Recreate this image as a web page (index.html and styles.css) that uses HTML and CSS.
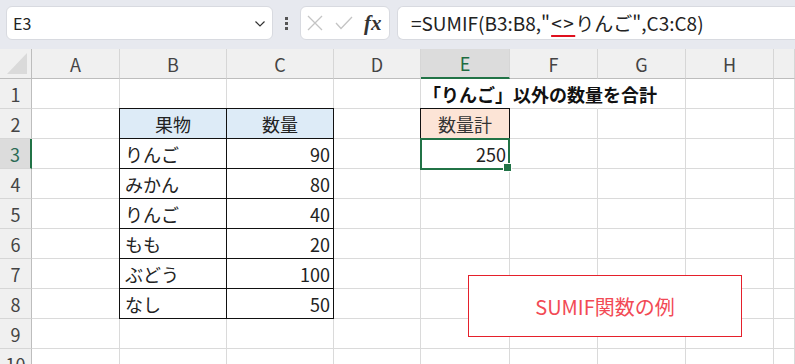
FILE: index.html
```html
<!DOCTYPE html>
<html lang="ja">
<head>
<meta charset="utf-8">
<link rel="stylesheet" href="styles.css">
</head>
<body>
<div class="topbar">
  <div class="namebox">
    <span class="name">E3</span>
    <svg class="chev" width="10" height="6" viewBox="0 0 10 6"><path d="M0.5 0.5 L5 5 L9.5 0.5" fill="none" stroke="#333" stroke-width="1.2"/></svg>
  </div>
  <div class="dots"><i></i><i></i><i></i></div>
  <div class="fxbox">
    <svg class="ic" width="16" height="16" viewBox="0 0 16 16"><path d="M1 1 L15 15 M15 1 L1 15" stroke="#c4c4c4" stroke-width="1.3" fill="none"/></svg>
    <svg class="ic" width="18" height="14" viewBox="0 0 18 14"><path d="M1 7 L6 12.5 L17 1" stroke="#c4c4c4" stroke-width="1.3" fill="none"/></svg>
    <span class="fx">fx</span>
  </div>
  <div class="formula">=SUMIF(B3:B8,"<span class="neq">&lt;&gt;</span>りんご",C3:C8)</div>
</div>
<div class="sheet">
  <div class="grid">
    <div class="corner"><span class="tri"></span></div>
    <div class="ch">A</div><div class="ch">B</div><div class="ch">C</div><div class="ch">D</div><div class="ch hsel">E</div><div class="ch">F</div><div class="ch">G</div><div class="ch">H</div><div class="ch"></div>

    <div class="rh">1</div><div class="c"></div><div class="c"></div><div class="c"></div><div class="c"></div><div class="c title nor">「りんご」以外の数量を合計</div><div class="c nor"></div><div class="c"></div><div class="c"></div><div class="c"></div>

    <div class="rh">2</div><div class="c"></div><div class="c tb hd">果物</div><div class="c tb hd">数量</div><div class="c"></div><div class="c tb hd2">数量計</div><div class="c"></div><div class="c"></div><div class="c"></div><div class="c"></div>

    <div class="rh rsel">3</div><div class="c"></div><div class="c tb">りんご</div><div class="c tb num">90</div><div class="c"></div><div class="c num sel">250</div><div class="c"></div><div class="c"></div><div class="c"></div><div class="c"></div>

    <div class="rh">4</div><div class="c"></div><div class="c tb">みかん</div><div class="c tb num">80</div><div class="c"></div><div class="c"></div><div class="c"></div><div class="c"></div><div class="c"></div><div class="c"></div>

    <div class="rh">5</div><div class="c"></div><div class="c tb">りんご</div><div class="c tb num">40</div><div class="c"></div><div class="c"></div><div class="c"></div><div class="c"></div><div class="c"></div><div class="c"></div>

    <div class="rh">6</div><div class="c"></div><div class="c tb">もも</div><div class="c tb num">20</div><div class="c"></div><div class="c"></div><div class="c"></div><div class="c"></div><div class="c"></div><div class="c"></div>

    <div class="rh">7</div><div class="c"></div><div class="c tb">ぶどう</div><div class="c tb num">100</div><div class="c"></div><div class="c"></div><div class="c"></div><div class="c"></div><div class="c"></div><div class="c"></div>

    <div class="rh">8</div><div class="c"></div><div class="c tb">なし</div><div class="c tb num">50</div><div class="c"></div><div class="c"></div><div class="c"></div><div class="c"></div><div class="c"></div><div class="c"></div>

    <div class="rh">9</div><div class="c"></div><div class="c"></div><div class="c"></div><div class="c"></div><div class="c"></div><div class="c"></div><div class="c"></div><div class="c"></div><div class="c"></div>

    <div class="rh">10</div><div class="c"></div><div class="c"></div><div class="c"></div><div class="c"></div><div class="c"></div><div class="c"></div><div class="c"></div><div class="c"></div><div class="c"></div>
  </div>
  <div class="shape">SUMIF関数の例</div>
</div>
</body>
</html>
```
FILE: styles.css
```css
* { box-sizing: border-box; }
html, body { margin: 0; padding: 0; }
body {
  width: 795px;
  height: 364px;
  overflow: hidden;
  background: #fff;
  font-family: "Noto Sans CJK JP", "Noto Sans", sans-serif;
  color: #222;
}
.topbar {
  height: 49px;
  background: #e7e9ef;
  display: flex;
  align-items: flex-start;
  padding-top: 6px;
}
.namebox {
  margin-left: 6px;
  width: 267px;
  height: 34px;
  background: #fff;
  border: 1px solid #d8dae0;
  border-radius: 6px;
  display: flex;
  align-items: center;
  justify-content: space-between;
  padding: 0 7px 0 6px;
}
.name { font-size: 16px; color: #222; }
.chev { margin-top: 1px; }
.dots {
  width: 27px;
  height: 34px;
  display: flex;
  flex-direction: column;
  align-items: center;
  justify-content: center;
  gap: 2px;
}
.dots i { display: block; width: 3px; height: 3px; background: #555; }
.fxbox {
  width: 90px;
  height: 34px;
  background: #fff;
  border: 1px solid #d8dae0;
  border-radius: 6px;
  display: flex;
  align-items: center;
  padding-left: 6px;
  gap: 12px;
}
.fx {
  font-family: "Liberation Serif", serif;
  font-style: italic;
  font-weight: bold;
  font-size: 21px;
  color: #333;
  margin-left: -1px;
}
.formula {
  margin-left: 7px;
  flex: 1;
  height: 34px;
  background: #fff;
  border: 1px solid #d8dae0;
  border-right: none;
  border-radius: 6px 0 0 6px;
  font-size: 19px;
  line-height: 32px;
  padding-left: 13px;
  color: #222;
  white-space: nowrap;
}
.neq { letter-spacing: 1.5px; padding-left: 1px; text-decoration: underline; text-decoration-color: #e0101e; text-decoration-thickness: 2px; text-underline-offset: 4px; }

.sheet { position: relative; }
.grid {
  display: grid;
  grid-template-columns: 32px 88px 107px 107px 87px 89px 88px 88px 88px 1fr;
  grid-template-rows: 30px repeat(10, 30px);
  font-size: 18px;
}
.corner {
  background: #f0f0f0;
  border-right: 1px solid #bdbdbd;
  border-bottom: 1px solid #bdbdbd;
  position: relative;
}
.tri {
  position: absolute;
  left: 7px;
  top: 4px;
  width: 0;
  height: 0;
  border-left: 20px solid transparent;
  border-bottom: 21px solid #dadada;
}
.ch {
  background: #f0f0f0;
  border-right: 1px solid #d6d6d6;
  border-bottom: 1px solid #bdbdbd;
  display: flex;
  align-items: center;
  justify-content: center;
  color: #444;
  font-size: 18px;
}
.ch.hsel { background: #dcdcdc; color: #1d6b40; border-bottom: 2px solid #217346; }
.rh {
  background: #f0f0f0;
  border-right: 1px solid #bdbdbd;
  border-bottom: 1px solid #d6d6d6;
  display: flex;
  align-items: center;
  justify-content: center;
  color: #444;
  font-size: 18px;
}
.rh.rsel { background: #dcdcdc; color: #2a6b55; border-right: 2px solid #217346; }
.c {
  border-right: 1px solid #dadada;
  border-bottom: 1px solid #dadada;
  display: flex;
  align-items: center;
  padding: 0 4px;
  white-space: nowrap;
  min-width: 0;
}
.c.nor { border-right-color: transparent; }
.c.title { font-weight: bold; overflow: visible; padding-left: 2px; color: #111; }
.c.tb { margin: -1px 0 0 -1px; border: 1px solid #111; padding-left: 5px; }
.c.hd { background: #ddebf7; justify-content: center; padding: 0; }
.c.hd2 { background: #fce4d6; justify-content: center; padding: 0; color: #333; }
.c.num { justify-content: flex-end; padding-right: 3px; }
.c.sel { position: relative; padding-right: 3px; }
.c.sel::before {
  content: "";
  position: absolute;
  left: -1px;
  top: -1px;
  right: -1px;
  bottom: -2px;
  border: 2px solid #217346;
}
.c.sel::after {
  content: "";
  position: absolute;
  right: -3px;
  bottom: -4px;
  width: 7px;
  height: 7px;
  background: #217346;
  border: 1px solid #fff;
}
.shape {
  position: absolute;
  left: 468px;
  top: 226px;
  width: 274px;
  height: 62px;
  background: #fff;
  border: 1px solid #e5202b;
  color: #f24a55;
  font-size: 20px;
  display: flex;
  align-items: center;
  justify-content: center;
}
```
